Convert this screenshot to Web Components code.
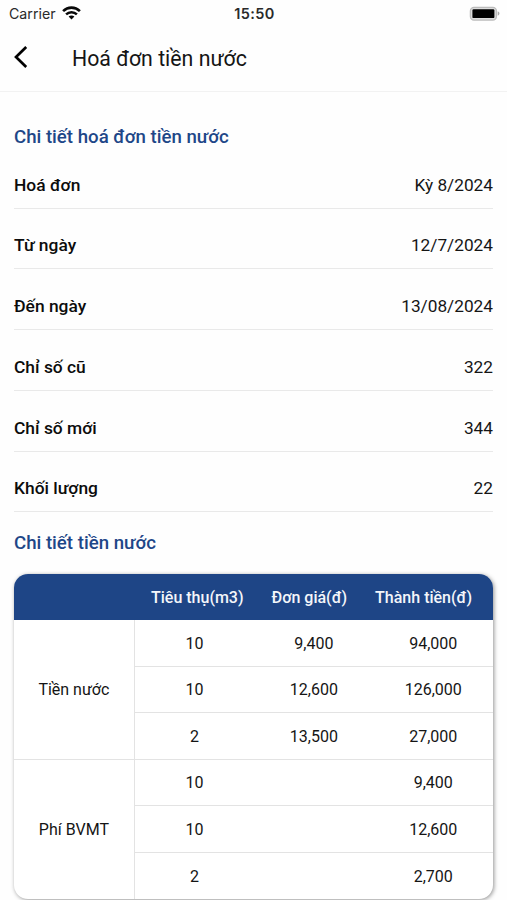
<!DOCTYPE html>
<html lang="vi">
<head>
<meta charset="utf-8">
<title>Hoá đơn tiền nước</title>
<style>
body {
  margin: 0;
  height: 900px;
  overflow: hidden;
  background: #fefefe;
  color: #151515;
  font-family: Roboto, "Noto Sans", sans-serif;
}
</style>
</head>
<body>
<water-bill></water-bill>

<script>
function attach(element, html) {
  const template = document.createElement('template');
  template.innerHTML = html;
  const root = element.attachShadow({mode: 'open'});
  root.appendChild(template.content.cloneNode(true));
  return root;
}

class StatusBar extends HTMLElement {
  constructor() {
    super();
    attach(this, `
<style>
:host {
  display: grid;
  grid-template-columns: 1fr auto 1fr;
  align-items: center;
  height: 27px;
  padding: 0 7px 0 9px;
  box-sizing: border-box;
  font-family: Inter, sans-serif;
  color: #2a2a2a;
}
.carrier {
  display: flex;
  align-items: center;
  gap: 6px;
  font-size: 14.2px;
}
.time {
  font-size: 14.5px;
  font-weight: 600;
  letter-spacing: 0.4px;
}
.battery {
  justify-self: end;
}
svg { display: block; }
.carrier svg { margin-top: -2px; }
.battery { margin-top: -1px; }
</style>
<div class="carrier"><span>Carrier</span>
  <svg width="19" height="14" viewBox="0 0 19 14" fill="none" stroke="#080808">
    <path d="M1.1 5.1C5.8 .5 13.2 .5 17.9 5.1" stroke-width="2.6"/>
    <path d="M4.1 8.3C7.1 5.4 11.9 5.4 14.9 8.3" stroke-width="2.5"/>
    <path d="M9.5 13.4L6.6 10.5C8.2 9.1 10.8 9.1 12.4 10.5Z" fill="#080808" stroke="none"/>
  </svg>
</div>
<div class="time"><slot></slot></div>
<svg class="battery" width="31" height="15" viewBox="0 0 31 15">
  <rect x="1.4" y="1.3" width="26" height="12.8" rx="3.6" fill="#ddd" stroke="#bcbcbc" stroke-width="1.3"/>
  <rect x="3.4" y="3.3" width="22" height="8.8" rx="1.2" fill="#000"/>
  <path d="M28.7 5.3C31 6.2 31 8.8 28.7 9.7Z" fill="#aaa"/>
</svg>`);
  }
}

class PageHeader extends HTMLElement {
  constructor() {
    super();
    attach(this, `
<style>
:host {
  display: flex;
  align-items: center;
  height: 65px;
  padding: 0 14px;
  box-sizing: border-box;
  border-bottom: 1px solid #f2f2f2;
}
svg { display: block; margin: -4px 44px 0 0; }
h1 {
  margin: -1px 0 0;
  font-size: 21.3px;
  font-weight: 400;
}
</style>
<svg width="14" height="24" viewBox="0 0 14 24" fill="none" stroke="#000" stroke-width="2.7">
  <path d="M12.2 2L2 12L12.2 22"/>
</svg>
<h1><slot></slot></h1>`);
  }
}

class SectionTitle extends HTMLElement {
  constructor() {
    super();
    attach(this, `
<style>
:host {
  display: block;
  height: 24px;
  line-height: 24px;
  font-size: 18.65px;
  font-weight: 500;
  color: #1e4788;
}
</style>
<slot></slot>`);
  }
}

class DetailRow extends HTMLElement {
  constructor() {
    super();
    attach(this, `
<style>
:host {
  display: flex;
  justify-content: space-between;
  align-items: flex-end;
  height: 60.8px;
  padding-bottom: 12px;
  box-sizing: border-box;
  border-bottom: 1px solid #e9e9e9;
  font-size: 17.25px;
  line-height: 22px;
}
.label { font-size: 17.4px; font-weight: 500; color: #0c0c0c; }
</style>
<span class="label"><slot name="label"></slot></span>
<span><slot></slot></span>`);
  }
}

class FeeTable extends HTMLElement {
  constructor() {
    super();
    attach(this, `
<style>
:host {
  display: block;
  border-radius: 14px;
  overflow: hidden;
  background: #fff;
  box-shadow: 1px 1px 4px rgba(0, 0, 0, 0.42);
}
.head {
  display: flex;
  justify-content: flex-end;
  align-items: center;
  gap: 28px;
  height: 46.5px;
  padding: 1px 21px 0 0;
  box-sizing: border-box;
  background: #1e4586;
  color: #f4f6fa;
  font-size: 16px;
  font-weight: 500;
  white-space: nowrap;
}
</style>
<div class="head">
  <span>Tiêu thụ(m3)</span><span>Đơn giá(đ)</span><span>Thành tiền(đ)</span>
</div>
<slot></slot>`);
  }
}

class FeeGroup extends HTMLElement {
  constructor() {
    super();
    const rows = this.getAttribute('rows').split(';').map((row) => row.split('|'));
    const cells = rows.map((row) =>
      `<div class="row">${row.map((cell) => `<span>${cell}</span>`).join('')}</div>`
    ).join('');
    attach(this, `
<style>
:host {
  display: grid;
  grid-template-columns: 1fr 3fr;
  font-size: 16px;
  text-align: center;
}
.name, .row {
  display: grid;
  align-items: center;
  box-sizing: border-box;
  border-bottom: 1px solid #e3e3e3;
}
.rows { border-left: 1px solid #e3e3e3; }
.row {
  grid-template-columns: repeat(3, 1fr);
  height: 46.5px;
}
:host(:last-child) .name,
:host(:last-child) .row:last-child { border-bottom: 0; }
</style>
<div class="name"><slot></slot></div>
<div class="rows">${cells}</div>`);
  }
}

class WaterBill extends HTMLElement {
  constructor() {
    super();
    attach(this, `
<style>
:host { display: block; }
main { padding: 33px 14px 0; }
detail-row:first-of-type { height: 59.5px; }
.fees { margin-top: 19px; }
fee-table { margin-top: 18.3px; }
</style>
<status-bar>15:50</status-bar>
<page-header>Hoá đơn tiền nước</page-header>
<main>
  <section-title>Chi tiết hoá đơn tiền nước</section-title>
  <detail-row><span slot="label">Hoá đơn</span>Kỳ 8/2024</detail-row>
  <detail-row><span slot="label">Từ ngày</span>12/7/2024</detail-row>
  <detail-row><span slot="label">Đến ngày</span>13/08/2024</detail-row>
  <detail-row><span slot="label">Chỉ số cũ</span>322</detail-row>
  <detail-row><span slot="label">Chỉ số mới</span>344</detail-row>
  <detail-row><span slot="label">Khối lượng</span>22</detail-row>
  <section-title class="fees">Chi tiết tiền nước</section-title>
  <fee-table>
    <fee-group rows="10|9,400|94,000;10|12,600|126,000;2|13,500|27,000">Tiền nước</fee-group>
    <fee-group rows="10||9,400;10||12,600;2||2,700">Phí BVMT</fee-group>
  </fee-table>
</main>`);
  }
}

customElements.define('status-bar', StatusBar);
customElements.define('page-header', PageHeader);
customElements.define('section-title', SectionTitle);
customElements.define('detail-row', DetailRow);
customElements.define('fee-group', FeeGroup);
customElements.define('fee-table', FeeTable);
customElements.define('water-bill', WaterBill);
</script>
</body>
</html>
